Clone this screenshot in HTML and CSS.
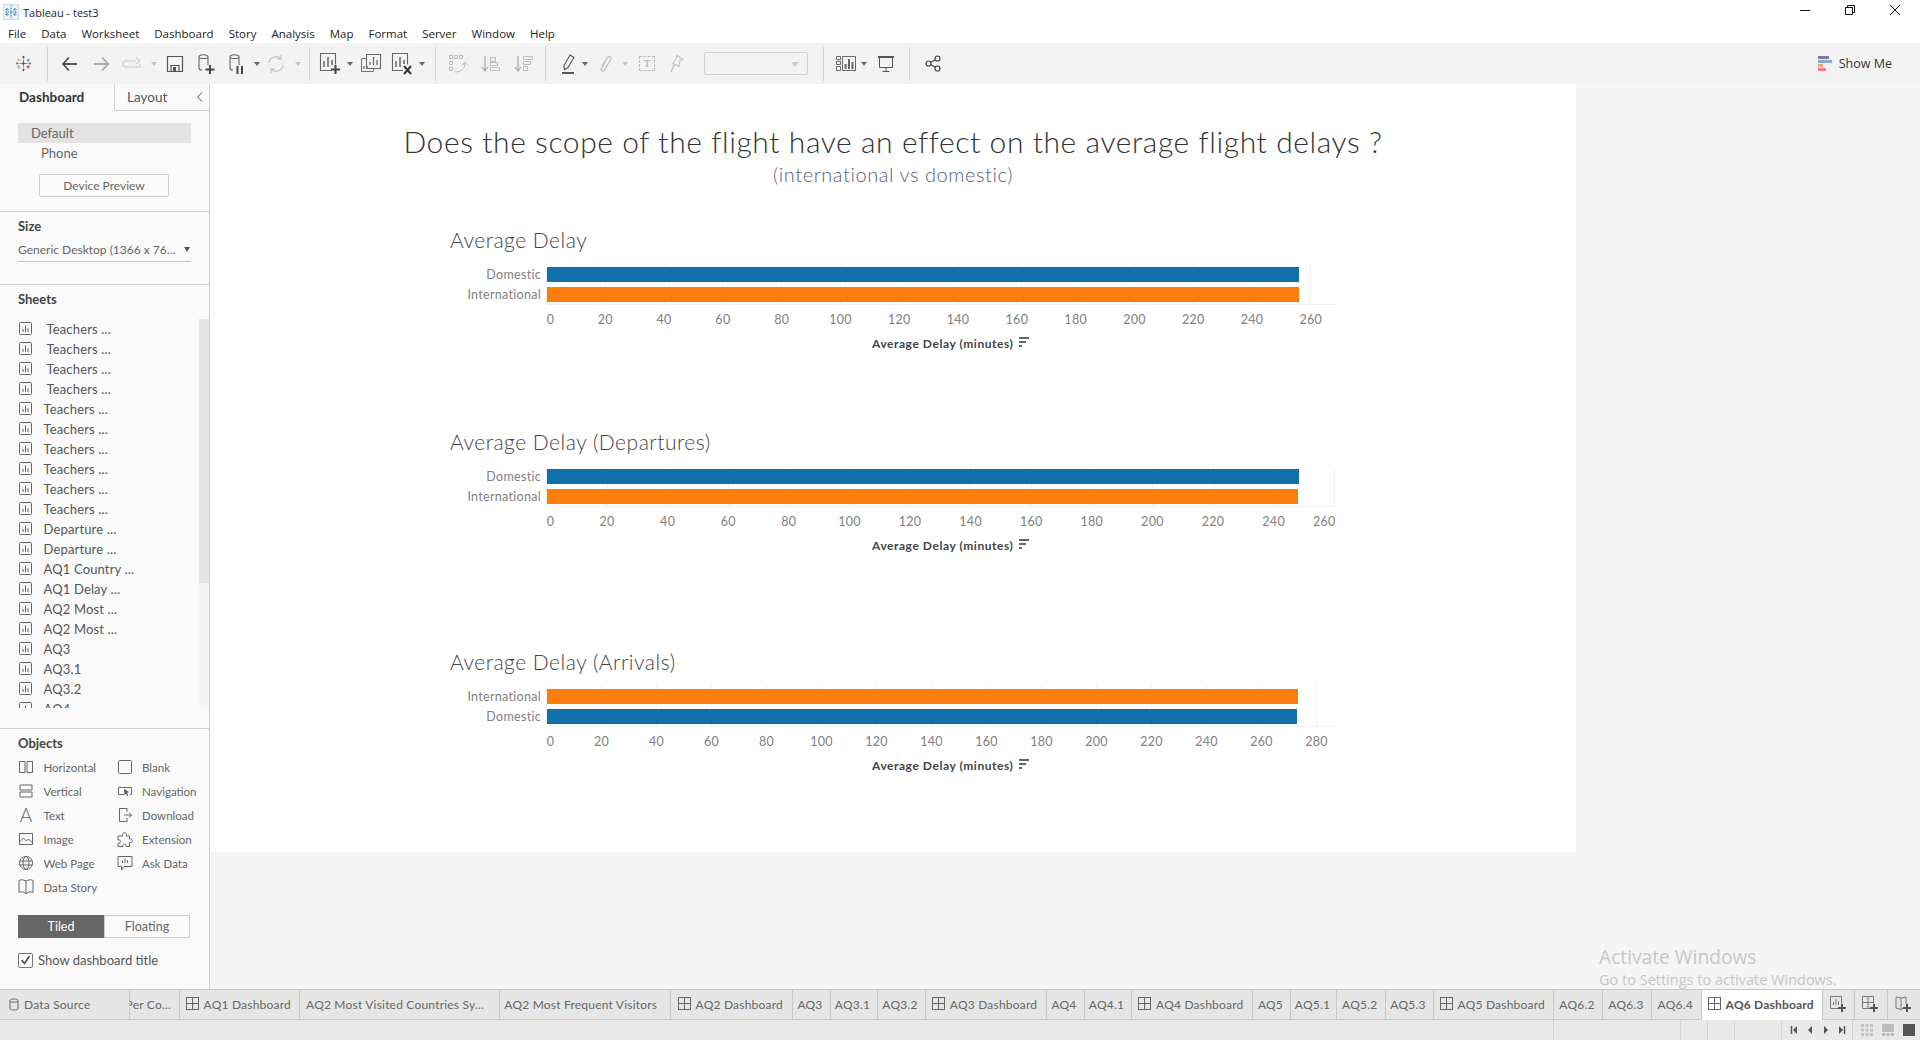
FILE: index.html
```html
<!DOCTYPE html>
<html lang="en">
<head>
    <meta charset="UTF-8">
    <title>Tableau - test3</title>
    <link rel="stylesheet" href="styles.css">
</head>
<body>

<svg class="defs" width="0" height="0">
    <symbol id="i-sheet" viewBox="0 0 13 13">
        <rect x="0.5" y="0.5" width="12" height="12" rx="1" fill="none" stroke="#666"/>
        <path d="M4 7v3M6.500 3.500v6.500M9 6v4" stroke="#666" fill="none"/>
    </symbol>
    <symbol id="i-grid" viewBox="0 0 13 13">
        <rect x="0.5" y="0.5" width="12" height="12" fill="none" stroke="#666"/>
        <path d="M6.5 0.5v12M0.5 6.5h12" stroke="#666" fill="none"/>
    </symbol>
    <symbol id="i-logo" viewBox="0 0 20 20">
        <path d="M10 5v10M5 10h10" stroke="#e8762d" stroke-width="1.100"/>
        <path d="M10 8v4M8 10h4" stroke="#c72035" stroke-width="1.300"/>
        <path d="M4.500 4v4M2.500 6h4" stroke="#e8a33d" stroke-width="1"/>
        <path d="M15.500 4v4M13.500 6h4" stroke="#5b879b" stroke-width="1"/>
        <path d="M4.500 12v4M2.500 14h4" stroke="#7099a6" stroke-width="1"/>
        <path d="M15.500 12v4M13.500 14h4" stroke="#c72035" stroke-width="1"/>
        <path d="M10 1v3M8.500 2.500h3M10 16v3M8.500 17.500h3" stroke="#1f457e" stroke-width="1"/>
        <path d="M1 10h3M2.500 8.500v3M16 10h3M17.500 8.500v3" stroke="#5b6591" stroke-width="1"/>
    </symbol>
</svg>

<div class="titlebar">
    <svg class="app-icon" width="16" height="16" viewBox="0 0 20 20">
        <rect x="0.5" y="0.5" width="19" height="19" fill="#eef4fa" stroke="#c9d6e2"/>
        <path d="M10 2v16M3 10h14M5 5v4M3 7h4M15 5v4M13 7h4M5 11v4M3 13h4M15 11v4M13 13h4" stroke="#2f7ab8" stroke-width="1.3" stroke-dasharray="2 1"/>
    </svg>
    <span class="app-name">Tableau - test3</span>
    <div class="win-controls">
        <svg width="10" height="10" viewBox="0 0 10 10"><path d="M0 5.500h10" stroke="#111"/></svg>
        <svg width="10" height="10" viewBox="0 0 10 10"><path d="M0.500 2.500h7v7h-7zM2.500 2.500v-2h7v7h-2" fill="none" stroke="#111"/></svg>
        <svg width="10" height="10" viewBox="0 0 10 10"><path d="M0 0l10 10M10 0L0 10" stroke="#111"/></svg>
    </div>
</div>

<nav class="menubar">
    <span>File</span><span>Data</span><span>Worksheet</span><span>Dashboard</span><span>Story</span><span>Analysis</span><span>Map</span><span>Format</span><span>Server</span><span>Window</span><span>Help</span>
</nav>

<div class="toolbar">
    <span class="tb w47"><svg width="17" height="17"><use href="#i-logo"/></svg></span>
    <span class="tb-sep"></span>

    <span class="tb-pad p6"></span>
    <span class="tb w31"><svg width="20" height="20" viewBox="0 0 20 20"><path d="M17 10H3M9 3.500L3 10l6 6.500" fill="none" stroke="#555" stroke-width="1.800"/></svg></span>
    <span class="tb w31"><svg width="20" height="20" viewBox="0 0 20 20"><path d="M3 10h14M11 3.500l6 6.500-6 6.500" fill="none" stroke="#aaa" stroke-width="1.800"/></svg></span>
    <span class="tb w31"><svg width="20" height="20" viewBox="0 0 20 20"><path d="M14 7H4a3 3 0 0 0 0 6h12a2 2 0 0 0 2-3M14 4l4 3-4 3" fill="none" stroke="#ccc" stroke-width="1.200"/></svg></span>
    <span class="tb-caret light"></span>
    <span class="tb w31"><svg width="18" height="20" viewBox="0 0 18 20"><path d="M1.500 2.500h15v15h-15zM5 17.500v-6h8v6" fill="none" stroke="#555" stroke-width="1.200"/><rect x="7" y="13" width="3" height="4" fill="#555"/></svg></span>
    <span class="tb w31"><svg width="20" height="22" viewBox="0 0 20 22"><path d="M3 4c0-3 9-3 9 0v8M3 4v11c0 1 1 2 3 2M3 4c0 2 9 2 9 0" fill="none" stroke="#666" stroke-width="1.100"/><path d="M14 12v9M9.500 16.500h9" stroke="#444" stroke-width="2"/></svg></span>
    <span class="tb w31"><svg width="20" height="22" viewBox="0 0 20 22"><path d="M3 4c0-3 9-3 9 0v8M3 4v11c0 1 1 2 3 2M3 4c0 2 9 2 9 0" fill="none" stroke="#666" stroke-width="1.100"/><path d="M10.500 13v8M15 13v8" stroke="#444" stroke-width="2"/></svg></span>
    <span class="tb-caret narrow"></span>
    <span class="tb w31"><svg width="20" height="20" viewBox="0 0 20 20"><path d="M3 9a7 7 0 0 1 12-4M17 11a7 7 0 0 1-12 4M15 1v4h-4M5 19v-4h4" fill="none" stroke="#ccc" stroke-width="1.400"/></svg></span>
    <span class="tb-caret light"></span>
    <span class="tb-pad p5"></span>
    <span class="tb-sep"></span>

    <span class="tb-pad p4"></span>
    <span class="tb w31"><svg width="22" height="24" viewBox="0 0 22 24"><path d="M13 18.500H1.500v-17h15v11" fill="none" stroke="#666" stroke-width="1.100"/><path d="M5 9v6M9 5v10M13 8v5" stroke="#666" stroke-width="1.500"/><path d="M16.500 13v9M12 17.500h9" stroke="#444" stroke-width="2"/></svg></span>
    <span class="tb-caret mid"></span>
    <span class="tb w31"><svg width="22" height="22" viewBox="0 0 22 22"><path d="M6.500 5.500h-5v13h12v-3" fill="none" stroke="#777"/><rect x="6.500" y="1.500" width="14" height="14" fill="#f3f3f3" stroke="#666"/><path d="M10 12V9M13.500 12V4M17 12V7M4 16v-3M7 16v-3M10 16v-1" stroke="#666" stroke-width="1.200"/></svg></span>
    <span class="tb w31"><svg width="22" height="24" viewBox="0 0 22 24"><path d="M12 18.500H1.500v-17h15v11" fill="none" stroke="#666" stroke-width="1.100"/><path d="M5 9v6M9 5v10M13 8v4" stroke="#666" stroke-width="1.500"/><path d="M13 14l7 8M20 14l-7 8" stroke="#333" stroke-width="2"/></svg></span>
    <span class="tb-caret mid"></span>
    <span class="tb-pad p8"></span>
    <span class="tb-sep"></span>

    <span class="tb-pad p5"></span>
    <span class="tb w33"><svg width="20" height="22" viewBox="0 0 20 22"><path d="M1.500 2.500h3v3h-3zM6.500 2.500h3v3h-3zM11.500 2.500h3v3h-3zM1.500 8.500h3v3h-3zM1.500 14.500h3v3h-3zM7 19c6 0 10-3 10-9M14 12.500l3-3.500 3 3.500" fill="none" stroke="#bbb"/></svg></span>
    <span class="tb w33"><svg width="20" height="20" viewBox="0 0 20 20"><path d="M4 2v15M1 13l3 4 3-4" fill="none" stroke="#aaa" stroke-width="1.200"/><path d="M9.500 3.500h5v4h-5zM9.500 8.500h7v3h-7zM9.500 13.500h9v3h-9z" fill="none" stroke="#bbb"/></svg></span>
    <span class="tb w33"><svg width="20" height="20" viewBox="0 0 20 20"><path d="M4 2v15M1 13l3 4 3-4" fill="none" stroke="#aaa" stroke-width="1.200"/><path d="M9.500 2.500h9v3h-9zM9.500 7.500h7v3h-7zM9.500 12.500h4v4h-4z" fill="none" stroke="#bbb"/></svg></span>
    <span class="tb-pad p5"></span>
    <span class="tb-sep"></span>

    <span class="tb-pad p11"></span>
    <span class="tb w22"><svg width="16" height="22" viewBox="0 0 16 22"><path d="M10 2l4 2.500-6 10-3.500 2L4 12.500z" fill="none" stroke="#555" stroke-width="1.100"/><path d="M2 20h12" stroke="#555" stroke-width="2"/></svg></span>
    <span class="tb-caret dark"></span>
    <span class="tb w28"><svg width="14" height="20" viewBox="0 0 14 20"><path d="M4 12l5-8c2-3 5-1 3.500 2l-6 10c-1 2-4 1-3-1.500L8 6" fill="none" stroke="#bbb" stroke-width="1.200"/></svg></span>
    <span class="tb-caret light"></span>
    <span class="tb w32"><span class="text-object">T</span></span>
    <span class="tb w28"><svg width="16" height="20" viewBox="0 0 16 20"><path d="M8 1.500l6 4-3 1-1 6-6-3 3-5zM5 11l-3 7" fill="none" stroke="#bbb" stroke-width="1.100"/></svg></span>
    <span class="tb-select"><i></i></span>
    <span class="tb-sep"></span>

    <span class="tb-pad p10"></span>
    <span class="tb w24"><svg width="20" height="15" viewBox="0 0 20 15"><path d="M0.500 0.500h4v3h-4zM0.500 5.500h4v3h-4zM0.500 10.500h4v4h-4zM6.500 0.500h13v14h-13z" fill="none" stroke="#666"/><path d="M9.500 13V8M13 13V3M16.500 13V6" stroke="#666" stroke-width="2"/></svg></span>
    <span class="tb-caret dark"></span>
    <span class="tb w32"><svg width="18" height="18" viewBox="0 0 18 18"><path d="M1 2h16" stroke="#555" stroke-width="2"/><path d="M2.500 2v10.500h13V2M9 12.500V16M5.500 16.500h7" fill="none" stroke="#555"/></svg></span>
    <span class="tb-pad p7"></span>
    <span class="tb-sep"></span>

    <span class="tb-pad p6"></span>
    <span class="tb w32"><svg width="16" height="17" viewBox="0 0 16 17"><circle cx="3.500" cy="8.500" r="2.500" fill="none" stroke="#444" stroke-width="1.200"/><circle cx="12.500" cy="3.500" r="2.500" fill="none" stroke="#444" stroke-width="1.200"/><circle cx="12.500" cy="13.500" r="2.500" fill="none" stroke="#444" stroke-width="1.200"/><path d="M5.700 7.300l4.600-2.600M5.700 9.700l4.600 2.600" stroke="#444" stroke-width="1.200"/></svg></span>

    <div class="show-me">
        <span class="show-me-icon"><i class="c1"></i><i class="c2"></i><i class="c3"></i><i class="c4"></i></span>
        Show Me
    </div>
</div>

<div class="main">
    <aside class="panel">
        <div class="panel-tabs">
            <div class="panel-tab active">Dashboard</div>
            <div class="panel-tab">Layout<svg class="chevron" width="7" height="10" viewBox="0 0 7 10"><path d="M6 0.500L1.500 5 6 9.500" fill="none" stroke="#555"/></svg></div>
        </div>

        <section class="device-section">
            <div class="device selected">Default</div>
            <div class="device phone">Phone</div>
            <button class="device-preview">Device Preview</button>
        </section>

        <section class="size-section">
            <h4>Size</h4>
            <div class="size-select">Generic Desktop (1366 x 76...<i></i></div>
        </section>

        <section class="sheets-section">
            <h4>Sheets</h4>
            <div class="sheets-body">
                <ul class="sheet-list">
                    <li class="indent"><svg><use href="#i-sheet"/></svg>Teachers ...</li>
                    <li class="indent"><svg><use href="#i-sheet"/></svg>Teachers ...</li>
                    <li class="indent"><svg><use href="#i-sheet"/></svg>Teachers ...</li>
                    <li class="indent"><svg><use href="#i-sheet"/></svg>Teachers ...</li>
                    <li><svg><use href="#i-sheet"/></svg>Teachers ...</li>
                    <li><svg><use href="#i-sheet"/></svg>Teachers ...</li>
                    <li><svg><use href="#i-sheet"/></svg>Teachers ...</li>
                    <li><svg><use href="#i-sheet"/></svg>Teachers ...</li>
                    <li><svg><use href="#i-sheet"/></svg>Teachers ...</li>
                    <li><svg><use href="#i-sheet"/></svg>Teachers ...</li>
                    <li><svg><use href="#i-sheet"/></svg>Departure ...</li>
                    <li><svg><use href="#i-sheet"/></svg>Departure ...</li>
                    <li><svg><use href="#i-sheet"/></svg>AQ1 Country ...</li>
                    <li><svg><use href="#i-sheet"/></svg>AQ1 Delay ...</li>
                    <li><svg><use href="#i-sheet"/></svg>AQ2 Most ...</li>
                    <li><svg><use href="#i-sheet"/></svg>AQ2 Most ...</li>
                    <li><svg><use href="#i-sheet"/></svg>AQ3</li>
                    <li><svg><use href="#i-sheet"/></svg>AQ3.1</li>
                    <li><svg><use href="#i-sheet"/></svg>AQ3.2</li>
                    <li><svg><use href="#i-sheet"/></svg>AQ4</li>
                </ul>
                <div class="scrollbar"><div class="thumb"></div></div>
            </div>
        </section>

        <section class="objects-section">
            <h4>Objects</h4>
            <div class="object-grid">
                <div class="object"><svg width="14" height="14" viewBox="0 0 14 14"><path d="M0.500 1.500h5.500v11h-5.500zM8 1.500h5.500v11H8z" fill="none" stroke="#666"/></svg>Horizontal</div>
                <div class="object"><svg width="14" height="14" viewBox="0 0 14 14"><rect x="0.500" y="0.500" width="13" height="13" rx="1" fill="none" stroke="#666"/></svg>Blank</div>
                <div class="object"><svg width="14" height="14" viewBox="0 0 14 14"><path d="M1 1h12v5H1zM1 8h12v5H1z" fill="none" stroke="#666"/></svg>Vertical</div>
                <div class="object"><svg width="14" height="12" viewBox="0 0 14 12"><path d="M6 9.500H0.500v-7h13v7H12" fill="none" stroke="#666"/><path d="M6 4l5 3-2 1 1.500 2.500-1 .5L8 8.500 6.500 10z" fill="#555"/></svg>Navigation</div>
                <div class="object"><span class="glyph-a">A</span>Text</div>
                <div class="object"><svg width="14" height="14" viewBox="0 0 14 14"><path d="M9 4V0.500H1.500v13H9V10M6 7h7.500M11 4.500L13.500 7 11 9.500" fill="none" stroke="#666"/></svg>Download</div>
                <div class="object"><svg width="14" height="12" viewBox="0 0 14 12"><path d="M0.500 0.500h13v11h-13zM0.500 9l4-4 3 3 2-2 4 4" fill="none" stroke="#666"/></svg>Image</div>
                <div class="object"><svg width="15" height="15" viewBox="0 0 15 15"><path d="M5 4V2.500c0-2.500 4-2.500 4 0V4h3v3h1c2.500 0 2.500 3.500 0 3.500h-1v4H8.500v-1c0-2-3-2-3 0v1H0.500v-3.500h1c2 0 2-3 0-3h-1V4z" fill="none" stroke="#666"/></svg>Extension</div>
                <div class="object"><svg width="14" height="14" viewBox="0 0 14 14"><circle cx="7" cy="7" r="6.500" fill="none" stroke="#666"/><ellipse cx="7" cy="7" rx="3" ry="6.500" fill="none" stroke="#666"/><path d="M0.500 5h13M0.500 9h13" stroke="#666"/></svg>Web Page</div>
                <div class="object"><svg width="15" height="15" viewBox="0 0 15 15"><path d="M0.500 0.500h14v10h-8l-2.500 3.500v-3.500H0.500z" fill="none" stroke="#666"/><path d="M5 7V4.500M7.500 7V2.500M10 7V4" stroke="#666"/></svg>Ask Data</div>
                <div class="object"><svg width="16" height="16" viewBox="0 0 16 16"><path d="M1 1.500c2-1 4-1 7 0.500 3-1.500 5-1.500 7-0.500v12c-2-1-4-1-7 1-3-2-5-2-7-1zM8 2v13" fill="none" stroke="#666"/></svg>Data Story</div>
            </div>
            <div class="tile-toggle">
                <div class="tile on">Tiled</div>
                <div class="tile">Floating</div>
            </div>
            <label class="show-title">
                <span class="checkbox"><svg width="11" height="10" viewBox="0 0 11 10"><path d="M1.500 5l3 3.500L9.500 1" fill="none" stroke="#444" stroke-width="1.500"/></svg></span>
                Show dashboard title
            </label>
        </section>
    </aside>

    <div class="stage">
        <main class="canvas">
            <h1 class="dash-title">Does the scope of the flight have an effect on the average flight delays ?</h1>
            <p class="dash-subtitle">(international vs domestic)</p>

            <section class="chart first" style="--step:58.8px">
                <h3 class="chart-title">Average Delay</h3>
                <div class="chart-body">
                    <div class="cats"><div>Domestic</div><div>International</div></div>
                    <div class="plot">
                        <div class="bar blue" style="width:752px"></div>
                        <div class="bar orange" style="width:752px"></div>
                    </div>
                </div>
                <div class="ticks">
                    <span class="zero">0</span><span>20</span><span>40</span><span>60</span><span>80</span><span>100</span><span>120</span><span>140</span><span>160</span><span>180</span><span>200</span><span>220</span><span>240</span><span>260</span>
                </div>
                <div class="axis-title">Average Delay (minutes)<span class="sort-icon"><i></i><i></i><i></i></span></div>
            </section>

            <section class="chart second" style="--step:60.6px">
                <h3 class="chart-title">Average Delay (Departures)</h3>
                <div class="chart-body">
                    <div class="cats"><div>Domestic</div><div>International</div></div>
                    <div class="plot short">
                        <div class="bar blue" style="width:752px"></div>
                        <div class="bar orange" style="width:751px"></div>
                    </div>
                </div>
                <div class="ticks">
                    <span class="zero">0</span><span>20</span><span>40</span><span>60</span><span>80</span><span>100</span><span>120</span><span>140</span><span>160</span><span>180</span><span>200</span><span>220</span><span>240</span><span class="clamped">260</span>
                </div>
                <div class="axis-title">Average Delay (minutes)<span class="sort-icon"><i></i><i></i><i></i></span></div>
            </section>

            <section class="chart third" style="--step:55px">
                <h3 class="chart-title">Average Delay (Arrivals)</h3>
                <div class="chart-body">
                    <div class="cats"><div>International</div><div>Domestic</div></div>
                    <div class="plot">
                        <div class="bar orange" style="width:751px"></div>
                        <div class="bar blue" style="width:750px"></div>
                    </div>
                </div>
                <div class="ticks">
                    <span class="zero">0</span><span>20</span><span>40</span><span>60</span><span>80</span><span>100</span><span>120</span><span>140</span><span>160</span><span>180</span><span>200</span><span>220</span><span>240</span><span>260</span><span>280</span>
                </div>
                <div class="axis-title">Average Delay (minutes)<span class="sort-icon"><i></i><i></i><i></i></span></div>
            </section>
        </main>
        <div class="activate">
            <div class="activate-big">Activate Windows</div>
            <div class="activate-small">Go to Settings to activate Windows.</div>
        </div>
    </div>
</div>

<div class="tabbar">
    <div class="tab first-tab"><svg width="10" height="13" viewBox="0 0 10 13"><path d="M1 2.500c0-2 8-2 8 0v8c0 2-8 2-8 0zM1 3c0 1.500 8 1.500 8 0" fill="none" stroke="#666"/></svg>Data Source</div>
    <div class="tab clipped"><span>Per Co...</span></div>
    <div class="tab"><svg class="grid-icon"><use href="#i-grid"/></svg>AQ1 Dashboard</div>
    <div class="tab long">AQ2 Most Visited Countries Sy...</div>
    <div class="tab long">AQ2 Most Frequent Visitors</div>
    <div class="tab"><svg class="grid-icon"><use href="#i-grid"/></svg>AQ2 Dashboard</div>
    <div class="tab">AQ3</div>
    <div class="tab">AQ3.1</div>
    <div class="tab">AQ3.2</div>
    <div class="tab"><svg class="grid-icon"><use href="#i-grid"/></svg>AQ3 Dashboard</div>
    <div class="tab">AQ4</div>
    <div class="tab">AQ4.1</div>
    <div class="tab"><svg class="grid-icon"><use href="#i-grid"/></svg>AQ4 Dashboard</div>
    <div class="tab">AQ5</div>
    <div class="tab">AQ5.1</div>
    <div class="tab">AQ5.2</div>
    <div class="tab">AQ5.3</div>
    <div class="tab"><svg class="grid-icon"><use href="#i-grid"/></svg>AQ5 Dashboard</div>
    <div class="tab">AQ6.2</div>
    <div class="tab">AQ6.3</div>
    <div class="tab">AQ6.4</div>
    <div class="tab current"><svg class="grid-icon"><use href="#i-grid"/></svg>AQ6 Dashboard</div>
    <div class="tab"><svg width="18" height="18" viewBox="0 0 18 18"><path d="M9 13.500H1.500v-12h11v7" fill="none" stroke="#777"/><path d="M4.500 10V7M7 10V4M9.500 10V6" stroke="#777"/><path d="M13 9v8M9 13h8" stroke="#555" stroke-width="2"/></svg></div>
    <div class="tab"><svg width="18" height="18" viewBox="0 0 18 18"><path d="M9 13.500H1.500v-12h11v7M7 1.500v12M1.500 7.500h11" fill="none" stroke="#777"/><path d="M13 9v8M9 13h8" stroke="#555" stroke-width="2"/></svg></div>
    <div class="tab"><svg width="18" height="18" viewBox="0 0 18 18"><path d="M9 13.500l-2 1-5-1.500v-11l5 1 5-1v7M7 3v11" fill="none" stroke="#777"/><path d="M13 9v8M9 13h8" stroke="#555" stroke-width="2"/></svg></div>
</div>

<div class="statusbar">
    <div></div>
    <div></div>
    <div></div>
    <div></div>
    <div></div>
    <div class="sheet-nav">
        <svg width="8" height="8" viewBox="0 0 8 8"><path d="M1.500 0v8" stroke="#555" stroke-width="1.500"/><path d="M7 0v8L3 4z" fill="#555"/></svg>
        <svg width="8" height="8" viewBox="0 0 8 8"><path d="M6 0v8L2 4z" fill="#555"/></svg>
        <svg width="8" height="8" viewBox="0 0 8 8"><path d="M2 0v8l4-4z" fill="#555"/></svg>
        <svg width="8" height="8" viewBox="0 0 8 8"><path d="M6.500 0v8" stroke="#555" stroke-width="1.500"/><path d="M1 0v8l4-4z" fill="#555"/></svg>
    </div>
    <div class="view-modes">
        <svg width="12" height="12" viewBox="0 0 12 12"><path d="M1.500 0v12M6 0v12M10.500 0v12" stroke="#c4c4c4" stroke-width="3" stroke-dasharray="3 1.500"/></svg>
        <svg width="12" height="12" viewBox="0 0 12 12"><rect width="12" height="8" fill="#bbb"/><path d="M0 10.500h12" stroke="#bbb" stroke-width="3" stroke-dasharray="3 1.500"/></svg>
        <svg width="12" height="12" viewBox="0 0 12 12"><rect width="12" height="12" fill="#555"/></svg>
    </div>
</div>

</body>
</html>
```

FILE: styles.css
```css
* {
    box-sizing: border-box;
}

html, body {
    margin: 0;
    height: 1040px;
    overflow: hidden;
}

body {
    font-family: "Lato", "Open Sans", sans-serif;
    background-color: #fff;
    color: #555;
}

.defs {
    position: absolute;
}

/* window chrome */
.titlebar {
    height: 24px;
    display: flex;
    align-items: center;
    padding: 0 20px 0 3px;
    font-family: "Open Sans", sans-serif;
    font-size: 11px;
    color: #222;
}

.app-icon {
    margin-right: 4px;
}

.win-controls {
    margin-left: auto;
    display: flex;
    gap: 35px;
    margin-top: -4px;
}

.menubar {
    height: 19px;
    display: flex;
    align-items: center;
    gap: 15px;
    padding-left: 8px;
    font-family: "Open Sans", sans-serif;
    font-size: 11.5px;
    color: #222;
}

/* toolbar */
.toolbar {
    height: 41px;
    display: flex;
    align-items: center;
    background-color: #f3f3f3;
}

.tb {
    display: flex;
    align-items: center;
    justify-content: center;
    flex: none;
}

.w22 { width: 22px; }
.w24 { width: 24px; }
.w28 { width: 28px; }
.w31 { width: 31px; }
.w32 { width: 32px; }
.w33 { width: 33px; }
.w47 { width: 47px; }

.tb-pad { flex: none; }
.p4 { width: 4.5px; }
.p5 { width: 5px; }
.p6 { width: 6.5px; }
.p7 { width: 7px; }
.p8 { width: 8px; }
.p10 { width: 10px; }
.p11 { width: 11px; }

.tb-sep {
    flex: none;
    width: 1px;
    height: 34px;
    background-color: #d2d2d2;
}

.tb-caret {
    flex: none;
    width: 12px;
    height: 10px;
    position: relative;
}

.tb-caret.narrow { width: 8px; }
.tb-caret.mid { width: 10px; }

.tb-caret::after {
    content: "";
    position: absolute;
    left: 50%;
    top: 3px;
    margin-left: -3px;
    border-left: 3px solid transparent;
    border-right: 3px solid transparent;
    border-top: 4px solid #666;
}

.tb-caret.light::after {
    border-top-color: #c4c4c4;
}

.text-object {
    width: 16px;
    height: 15px;
    border: 1px dashed #bbb;
    font-family: "Liberation Serif", serif;
    font-size: 11px;
    line-height: 13px;
    text-align: center;
    color: #aaa;
}

.tb-select {
    flex: none;
    width: 104px;
    height: 23px;
    margin: 0 15px 0 13px;
    border: 1px solid #d2d2d2;
    border-radius: 2px;
    position: relative;
}

.tb-select i {
    position: absolute;
    right: 8px;
    top: 9px;
    border-left: 4px solid transparent;
    border-right: 4px solid transparent;
    border-top: 5px solid #ccc;
}

.show-me {
    margin-left: auto;
    padding-right: 28px;
    display: flex;
    align-items: center;
    gap: 7px;
    font-family: "Open Sans", sans-serif;
    font-size: 12.5px;
    color: #333;
}

.show-me-icon {
    width: 14px;
    display: flex;
    flex-direction: column;
    gap: 1px;
}

.show-me-icon i {
    display: block;
    height: 3px;
}

.c1 { width: 11px; background-color: #8a76a3; }
.c2 { width: 14px; background-color: #84a9d2; }
.c3 { width: 5px; background-color: #f4a880; }
.c4 { width: 8px; background-color: #f77e87; }

/* main area */
.main {
    height: 905px;
    display: flex;
    overflow: hidden;
}

.panel {
    flex: none;
    width: 210px;
    background-color: #fafafa;
    border-right: 1px solid #cfcfcf;
    display: flex;
    flex-direction: column;
}

.panel section {
    border-bottom: 1px solid #cfcfcf;
}

.panel h4 {
    margin: 0;
    font-size: 13px;
    font-weight: 700;
    color: #444;
    line-height: 18px;
}

.panel-tabs {
    height: 27px;
    display: flex;
    font-size: 13.5px;
    line-height: 26px;
}

.panel-tab {
    flex: 1;
    border-bottom: 1px solid #cfcfcf;
    border-left: 1px solid #cfcfcf;
    padding-left: 12px;
    position: relative;
    color: #555;
}

.panel-tab.active {
    flex: none;
    width: 114px;
    border-bottom: none;
    border-left: none;
    padding-left: 19px;
    font-weight: 700;
    color: #333;
}

.chevron {
    position: absolute;
    right: 6px;
    top: 8px;
}

.device-section {
    height: 101px;
    padding: 12px 18px 0;
    font-size: 13px;
}

.device {
    height: 20px;
    line-height: 20px;
    padding-left: 13px;
    color: #666;
}

.device.selected {
    background-color: #e3e3e3;
}

.device.phone {
    padding-left: 23px;
}

.device-preview {
    display: block;
    width: 130px;
    height: 23px;
    margin: 11px 0 0 21px;
    padding: 0;
    background-color: #fafafa;
    border: 1px solid #ccc;
    border-radius: 2px;
    font-family: inherit;
    font-size: 12px;
    color: #666;
}

.size-section {
    height: 73px;
    padding: 5px 18px 0;
}

.size-select {
    margin-top: 3px;
    height: 24px;
    line-height: 23px;
    border-bottom: 1px solid #c4c4c4;
    font-size: 12px;
    color: #666;
    position: relative;
    white-space: nowrap;
}

.size-select i {
    position: absolute;
    right: 1px;
    top: 9px;
    border-left: 3px solid transparent;
    border-right: 3px solid transparent;
    border-top: 5px solid #555;
}

.sheets-section {
    height: 444px;
    padding-top: 5px;
}

.sheets-section h4 {
    padding-left: 18px;
}

.sheets-body {
    display: flex;
    height: 389px;
    margin-top: 11px;
    overflow: hidden;
}

.sheet-list {
    flex: 1;
    margin: 0;
    padding: 0 0 0 19px;
    list-style: none;
    font-size: 13px;
    letter-spacing: 0.15px;
    color: #555;
}

.sheet-list li {
    height: 20px;
    display: flex;
    align-items: center;
    white-space: nowrap;
}

.sheet-list svg {
    width: 13px;
    height: 13px;
    margin-right: 11.5px;
    margin-top: -2px;
}

.sheet-list li.indent svg {
    margin-right: 14.5px;
}

.scrollbar {
    flex: none;
    width: 10px;
    background-color: #f5f5f5;
}

.thumb {
    height: 264px;
    background-color: #e3e3e3;
}

.panel .objects-section {
    flex: 1;
    padding: 5px 0 0 18px;
    border-bottom: none;
}

.object-grid {
    display: grid;
    grid-template-columns: 98.5px 1fr;
    grid-auto-rows: 24px;
    margin-top: 3px;
    font-size: 11.5px;
    color: #666;
}

.object {
    display: flex;
    align-items: center;
    white-space: nowrap;
}

.object svg, .glyph-a {
    flex: none;
    width: 16px;
    margin-right: 9.5px;
}

.glyph-a {
    font-size: 19px;
    font-weight: 300;
    line-height: 20px;
    text-align: center;
}

.tile-toggle {
    display: flex;
    width: 172px;
    height: 23px;
    margin-top: 16px;
    font-size: 12.5px;
    line-height: 21px;
    text-align: center;
}

.tile {
    flex: 1;
    border: 1px solid #ccc;
    color: #666;
}

.tile.on {
    background-color: #666;
    border-color: #666;
    color: #fff;
}

.show-title {
    display: flex;
    align-items: center;
    gap: 5px;
    margin-top: 14px;
    font-size: 13px;
    color: #555;
}

.checkbox {
    width: 15px;
    height: 15px;
    border: 1px solid #777;
    border-radius: 2px;
    background-color: #fff;
    display: flex;
    align-items: center;
    justify-content: center;
}

.stage {
    flex: 1;
    background-color: #f5f5f5;
    position: relative;
    overflow: hidden;
}

/* dashboard */
.canvas {
    width: 1366px;
    height: 768px;
    background-color: #fff;
    padding-top: 37px;
}

.dash-title {
    margin: 0;
    font-size: 30px;
    font-weight: 300;
    line-height: 40px;
    letter-spacing: 0.58px;
    text-align: center;
    color: #333;
}

.dash-subtitle {
    margin: 1px 0 0;
    font-size: 20px;
    font-weight: 300;
    line-height: 24px;
    letter-spacing: 0.57px;
    text-align: center;
    color: #55617d;
}

.chart {
    margin-left: 240px;
}

.chart.first { margin-top: 39px; }
.chart.second { margin-top: 74px; }
.chart.third { margin-top: 92px; }

.chart-title {
    margin: 0 0 9px;
    font-size: 21px;
    font-weight: 300;
    line-height: 30px;
    letter-spacing: 0.5px;
    color: #444;
}

.chart-body {
    display: flex;
}

.cats {
    width: 96px;
    padding: 1px 5px 0 0;
    font-size: 12.5px;
    line-height: 20px;
    letter-spacing: 0.3px;
    text-align: right;
    color: #808080;
}

.plot {
    width: 791px;
    height: 41px;
    padding-top: 3px;
    border-bottom: 1px solid #f0f0f0;
    background-image: repeating-linear-gradient(to right, #f0f0f0 0, #f0f0f0 1px, transparent 1px, transparent var(--step));
}

.plot.short {
    width: 789px;
}

.bar {
    height: 15px;
    margin: 0 0 5px 1px;
}

.bar.blue { background-color: #1170aa; }
.bar.orange { background-color: #fc7d0b; }

.ticks {
    display: flex;
    margin: 5px 0 0 calc(96.5px - var(--step) / 2);
    font-size: 12.5px;
    line-height: 20px;
    letter-spacing: 0.3px;
    color: #808080;
}

.ticks span {
    flex: none;
    width: var(--step);
    text-align: center;
}

.ticks .zero {
    padding-left: 8px;
}

.ticks .clamped {
    padding-right: 20px;
}

.axis-title {
    display: flex;
    align-items: center;
    margin-top: 3px;
    padding-left: 422px;
    height: 20px;
    font-size: 12px;
    font-weight: 700;
    letter-spacing: 0.55px;
    color: #444;
}

.sort-icon {
    margin-left: 6px;
    display: flex;
    flex-direction: column;
    gap: 2px;
    margin-top: -2px;
}

.sort-icon i {
    display: block;
    height: 2px;
    background-color: #666;
}

.sort-icon i:nth-child(1) { width: 10px; }
.sort-icon i:nth-child(2) { width: 7px; }
.sort-icon i:nth-child(3) { width: 3px; }

/* the windows watermark sits over the empty area */
.activate {
    position: absolute;
    left: 1389px;
    top: 860px;
    font-family: "Open Sans", sans-serif;
    color: #c6c6c6;
    white-space: nowrap;
}

.activate-big {
    font-size: 19.2px;
    line-height: 26px;
}

.activate-small {
    font-size: 14.5px;
    line-height: 20px;
}

/* sheet tabs */
.tabbar {
    height: 31px;
    display: grid;
    grid-template-columns: 130px 50px 119.5px 200px 171.5px 121.5px 38px 47px 48px 121px 38px 47px 121.5px 38px 46px 48.5px 48px 120.5px 49px 49px 49.5px 121.5px 32px 32.5px 32.5px;
    background-color: #e6e6e6;
    border-top: 1px solid #c8c8c8;
    border-bottom: 1px solid #c8c8c8;
    font-size: 12px;
    letter-spacing: 0.2px;
    color: #666;
}

.tab {
    display: flex;
    align-items: center;
    justify-content: center;
    gap: 5px;
    padding: 0 2px 1px 0;
    border-right: 1px solid #c8c8c8;
    white-space: nowrap;
    overflow: hidden;
}

.tab.long {
    padding-right: 8px;
}

.tab:last-child {
    border-right: none;
}

.first-tab {
    justify-content: flex-start;
    padding-left: 9px;
}

.clipped {
    justify-content: flex-end;
    padding-right: 8px;
}

.grid-icon {
    flex: none;
    width: 13px;
    height: 13px;
    margin-top: -2px;
}

.tab.current {
    background-color: #fff;
    font-weight: 700;
    color: #555;
    margin-bottom: -1px;
}

.statusbar {
    height: 20px;
    display: grid;
    grid-template-columns: 1553px 127px 27px 27px 47px 71px 1fr;
    background-color: #e9e9e9;
}

.statusbar > div {
    border-left: 1px solid #d4d4d4;
}

.statusbar > div:first-child {
    border-left: none;
}

.sheet-nav, .view-modes {
    display: flex;
    align-items: center;
}

.sheet-nav {
    gap: 8px;
    padding-left: 8px;
}

.view-modes {
    gap: 9px;
    padding-left: 8px;
}
```
